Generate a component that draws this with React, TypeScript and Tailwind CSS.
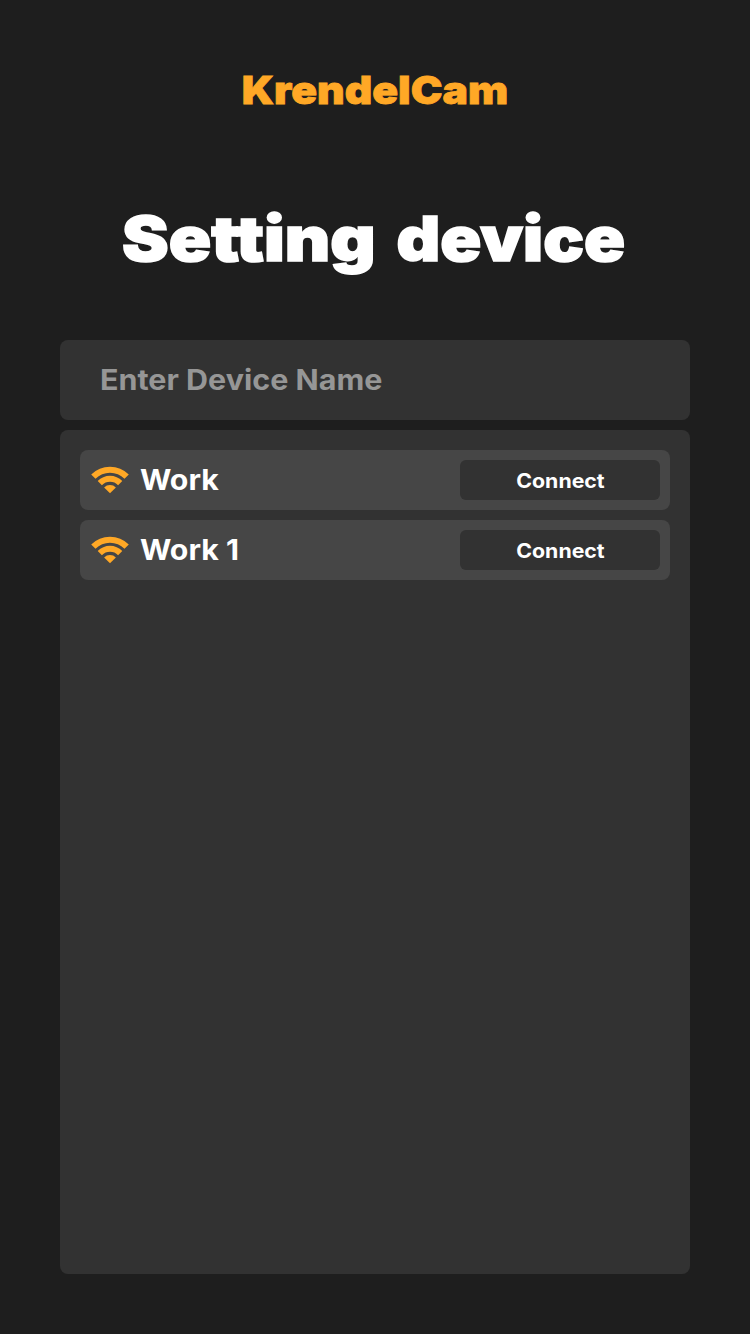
function WifiIcon() {
  return (
    <svg viewBox="0 0 40 40" className="h-10 w-10 shrink-0" fill="#ffa826" aria-hidden="true">
      <path d="M1.2 14.5A26.6 26.6 0 0 1 38.8 14.5L34.5 18.8A20.5 20.5 0 0 0 5.5 18.8Z" />
      <path d="M7.7 21A17.3 17.3 0 0 1 32.3 21L28.1 25.2A11.5 11.5 0 0 0 11.9 25.2Z" />
      <path d="M14.1 27.4A8.4 8.4 0 0 1 25.9 27.4L20 33.3Z" />
    </svg>
  );
}

function NetworkRow({ name }: { name: string }) {
  return (
    <li className="flex h-[60px] items-center rounded-lg bg-[#464646] p-2.5">
      <WifiIcon />
      <span className="ml-2.5 flex-1 origin-left scale-x-[1.08] text-[28px] leading-10 font-bold text-white">
        {name}
      </span>
      <button className="h-10 w-[200px] shrink-0 rounded-md bg-[#323232] pt-0.5 text-xl font-bold text-white">
        <span className="inline-block scale-x-[1.065]">Connect</span>
      </button>
    </li>
  );
}

export default function App() {
  return (
    <main className="flex h-[1334px] w-[750px] flex-col bg-[#1e1e1e] px-[60px] pb-[60px] font-[Inter,sans-serif]">
      <div className="mt-[65px] h-[50px] text-center text-[39px] leading-[50px] font-black text-[#ffa826]">
        <span className="inline-block scale-x-[1.093] [-webkit-text-stroke:0.8px_#ffa826]">KrendelCam</span>
      </div>
      <h1 className="mt-[84px] flex h-20 justify-between pr-[65px] pl-[62px] text-[62px] leading-20 font-black text-white [-webkit-text-stroke:1.6px_#ffffff]">
        <span className="origin-left scale-x-[1.13]">Setting</span>
        <span className="origin-right scale-x-[1.093]">device</span>
      </h1>
      <label className="mt-[61px] block h-20 w-full shrink-0 rounded-lg bg-[#323232] px-10">
        <input
          aria-label="Device name"
          placeholder="Enter Device Name"
          className="h-20 w-[500px] origin-left scale-x-[1.088] bg-transparent text-[28px] font-bold text-white outline-none placeholder:text-[#969696]"
        />
      </label>
      <ul className="mt-2.5 flex flex-1 flex-col gap-2.5 rounded-lg bg-[#323232] p-5">
        <NetworkRow name="Work" />
        <NetworkRow name="Work 1" />
      </ul>
    </main>
  );
}
